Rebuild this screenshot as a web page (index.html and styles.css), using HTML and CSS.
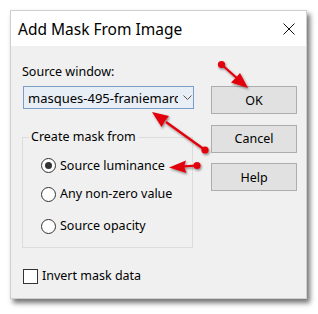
FILE: index.html
```html
<!DOCTYPE html>
<html>
<head>
<meta charset="utf-8">
<link rel="stylesheet" href="styles.css">
</head>
<body>
<div class="dialog">
  <div class="titlebar">
    <span class="title">Add Mask From Image</span>
    <svg class="close" width="12" height="12" viewBox="0 0 12 12"><path d="M0.5 0.5 L11.5 11.5 M11.5 0.5 L0.5 11.5" stroke="#111" stroke-width="1" fill="none"/></svg>
  </div>
  <div class="content">
    <div class="left">
      <div class="label">Source window:</div>
      <div class="select">
        <span class="select-text">masques-495-franiemarc</span>
        <svg class="chevron" width="9" height="5" viewBox="0 0 9 5"><path d="M0.5 0.5 L4.5 4.5 L8.5 0.5" stroke="#555" stroke-width="1" fill="none"/></svg>
      </div>
      <fieldset class="group">
        <legend>Create mask from</legend>
        <div class="radio r1"><span class="circle checked"></span><span>Source luminance</span></div>
        <div class="radio r2"><span class="circle"></span><span>Any non-zero value</span></div>
        <div class="radio r3"><span class="circle"></span><span>Source opacity</span></div>
      </fieldset>
      <div class="check"><span class="box"></span><span>Invert mask data</span></div>
    </div>
    <div class="right">
      <button class="btn">OK</button>
      <button class="btn">Cancel</button>
      <button class="btn">Help</button>
    </div>
  </div>
</div>
<svg class="arrows" width="318" height="314" viewBox="0 0 318 314">
  <defs>
    <filter id="sh" x="-20%" y="-20%" width="140%" height="140%">
      <feDropShadow dx="1" dy="1.5" stdDeviation="1" flood-color="#000" flood-opacity="0.45"/>
    </filter>
  </defs>
  <g filter="url(#sh)" fill="#e3000b" stroke="#e3000b">
    <line x1="221.5" y1="64.5" x2="238" y2="79" stroke-width="2.2"/>
    <circle cx="221.5" cy="64.5" r="3.6" stroke="none"/>
    <path d="M248 88 L231 82.5 L235.5 78 L240 73 Z" stroke="none"/>

    <line x1="205" y1="150" x2="166" y2="122" stroke-width="2.2"/>
    <circle cx="205" cy="150" r="3.6" stroke="none"/>
    <path d="M152 112 L169 116 L165 121 L161.5 127 Z" stroke="none"/>

    <line x1="197" y1="165.5" x2="184" y2="166.4" stroke-width="2.2"/>
    <circle cx="197" cy="165.5" r="3.6" stroke="none"/>
    <path d="M169 167.5 L186 160.5 L184 166.4 L186.5 173 Z" stroke="none"/>
  </g>
</svg>
</body>
</html>
```

FILE: styles.css
```css
html, body {
  margin: 0;
  padding: 0;
  background: #ffffff;
}
body {
  position: relative;
  width: 318px;
  height: 314px;
  overflow: hidden;
  font-family: "Noto Sans", "Open Sans", sans-serif;
  color: #000;
}
.dialog {
  margin: 10px 0 0 10px;
  width: 297px;
  height: 289px;
  box-sizing: border-box;
  border: 1px solid #cfcfcf;
  background: #f0f0f0;
  box-shadow: 3px 4px 5px rgba(0, 0, 0, 0.55);
  display: flex;
  flex-direction: column;
}
.titlebar {
  height: 35px;
  background: #ffffff;
  display: flex;
  align-items: center;
  justify-content: space-between;
  padding: 0 11px 0 7px;
  flex: none;
}
.title {
  font-size: 15.5px;
  line-height: 20px;
  color: #000;
}
.close {
  display: block;
}
.content {
  display: flex;
  padding: 0 0 0 11px;
}
.left {
  width: 172px;
  display: flex;
  flex-direction: column;
  font-size: 12.5px;
}
.label {
  margin-top: 18px;
  line-height: 16px;
}
.select {
  margin-top: 6px;
  margin-left: 1px;
  width: 171px;
  height: 23px;
  box-sizing: border-box;
  border: 1px solid #7a9ec8;
  background: #e8eef5;
  display: flex;
  align-items: center;
  padding: 0 0 0 4px;
  overflow: hidden;
}
.select-text {
  width: 150px;
  overflow: hidden;
  white-space: nowrap;
  line-height: 16px;
  font-size: 13px;
  flex: none;
}
.chevron {
  margin-left: 5px;
  flex: none;
}
.group {
  margin: 20px 0 0 0;
  width: 171px;
  box-sizing: border-box;
  border: 1px solid #dcdcdc;
  padding: 0 0 13px 6px;
  min-width: 0;
}
.group legend {
  padding: 0 2px;
  margin: 0;
  line-height: 16px;
}
.radio {
  display: flex;
  align-items: center;
  height: 15px;
  line-height: 16px;
  margin-left: 12px;
}
.r1 { margin-top: 13px; }
.r2 { margin-top: 13.5px; }
.r3 { margin-top: 17px; }
.circle {
  width: 15px;
  height: 15px;
  box-sizing: border-box;
  border: 1px solid #333;
  border-radius: 50%;
  background: #fff;
  margin-right: 4px;
  flex: none;
  display: flex;
  align-items: center;
  justify-content: center;
}
.circle.checked::after {
  content: "";
  width: 7px;
  height: 7px;
  border-radius: 50%;
  background: #333;
}
.check {
  margin-top: 21px;
  margin-left: 1px;
  display: flex;
  align-items: center;
  height: 15px;
  line-height: 16px;
}
.box {
  width: 15px;
  height: 15px;
  box-sizing: border-box;
  border: 1px solid #333;
  background: #fff;
  margin-right: 4px;
  flex: none;
}
.right {
  margin-left: 17px;
  margin-top: 40px;
  display: flex;
  flex-direction: column;
  gap: 10.5px;
}
.btn {
  width: 86px;
  height: 28px;
  box-sizing: border-box;
  border: 1px solid #adadad;
  background: #e1e1e1;
  font-family: "Noto Sans", "Open Sans", sans-serif;
  font-size: 12.5px;
  color: #000;
  padding: 0;
  margin: 0;
}
.arrows {
  position: absolute;
  left: 0;
  top: 0;
  pointer-events: none;
}
```
